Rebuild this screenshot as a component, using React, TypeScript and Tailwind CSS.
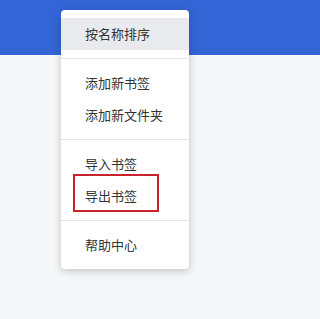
import React from 'react';

const groups: string[][] = [
  ['按名称排序'],
  ['添加新书签', '添加新文件夹'],
  ['导入书签', '导出书签'],
  ['帮助中心'],
];

export default function App() {
  return (
    <div
      className="relative h-[319px] w-full overflow-hidden bg-[#f6f7f9]"
      style={{ fontFamily: '"Noto Sans CJK SC", "Noto Sans", sans-serif' }}
    >
      <div className="h-[55px] bg-[#3465d6]" />

      {/* dropdown menu */}
      <div className="absolute left-[61px] top-[10px] w-[128px] rounded-[4px] bg-white shadow-[0_2px_8px_rgba(0,0,0,0.22)]">
        {groups.map((items, gi) => (
          <div key={gi} className={gi > 0 ? 'border-t border-[#e6e6e6] py-2' : 'py-2'}>
            {items.map((label) => (
              <div
                key={label}
                className={
                  'flex h-[32px] items-center pl-[24px] text-[13px] text-[#333] ' +
                  (label === '按名称排序' ? 'bg-[#e9eaee]' : '')
                }
              >
                {label}
              </div>
            ))}
          </div>
        ))}
      </div>

      {/* annotation box */}
      <div className="absolute left-[73px] top-[174px] h-[38px] w-[86px] border-2 border-[#c8232c]" />
    </div>
  );
}
